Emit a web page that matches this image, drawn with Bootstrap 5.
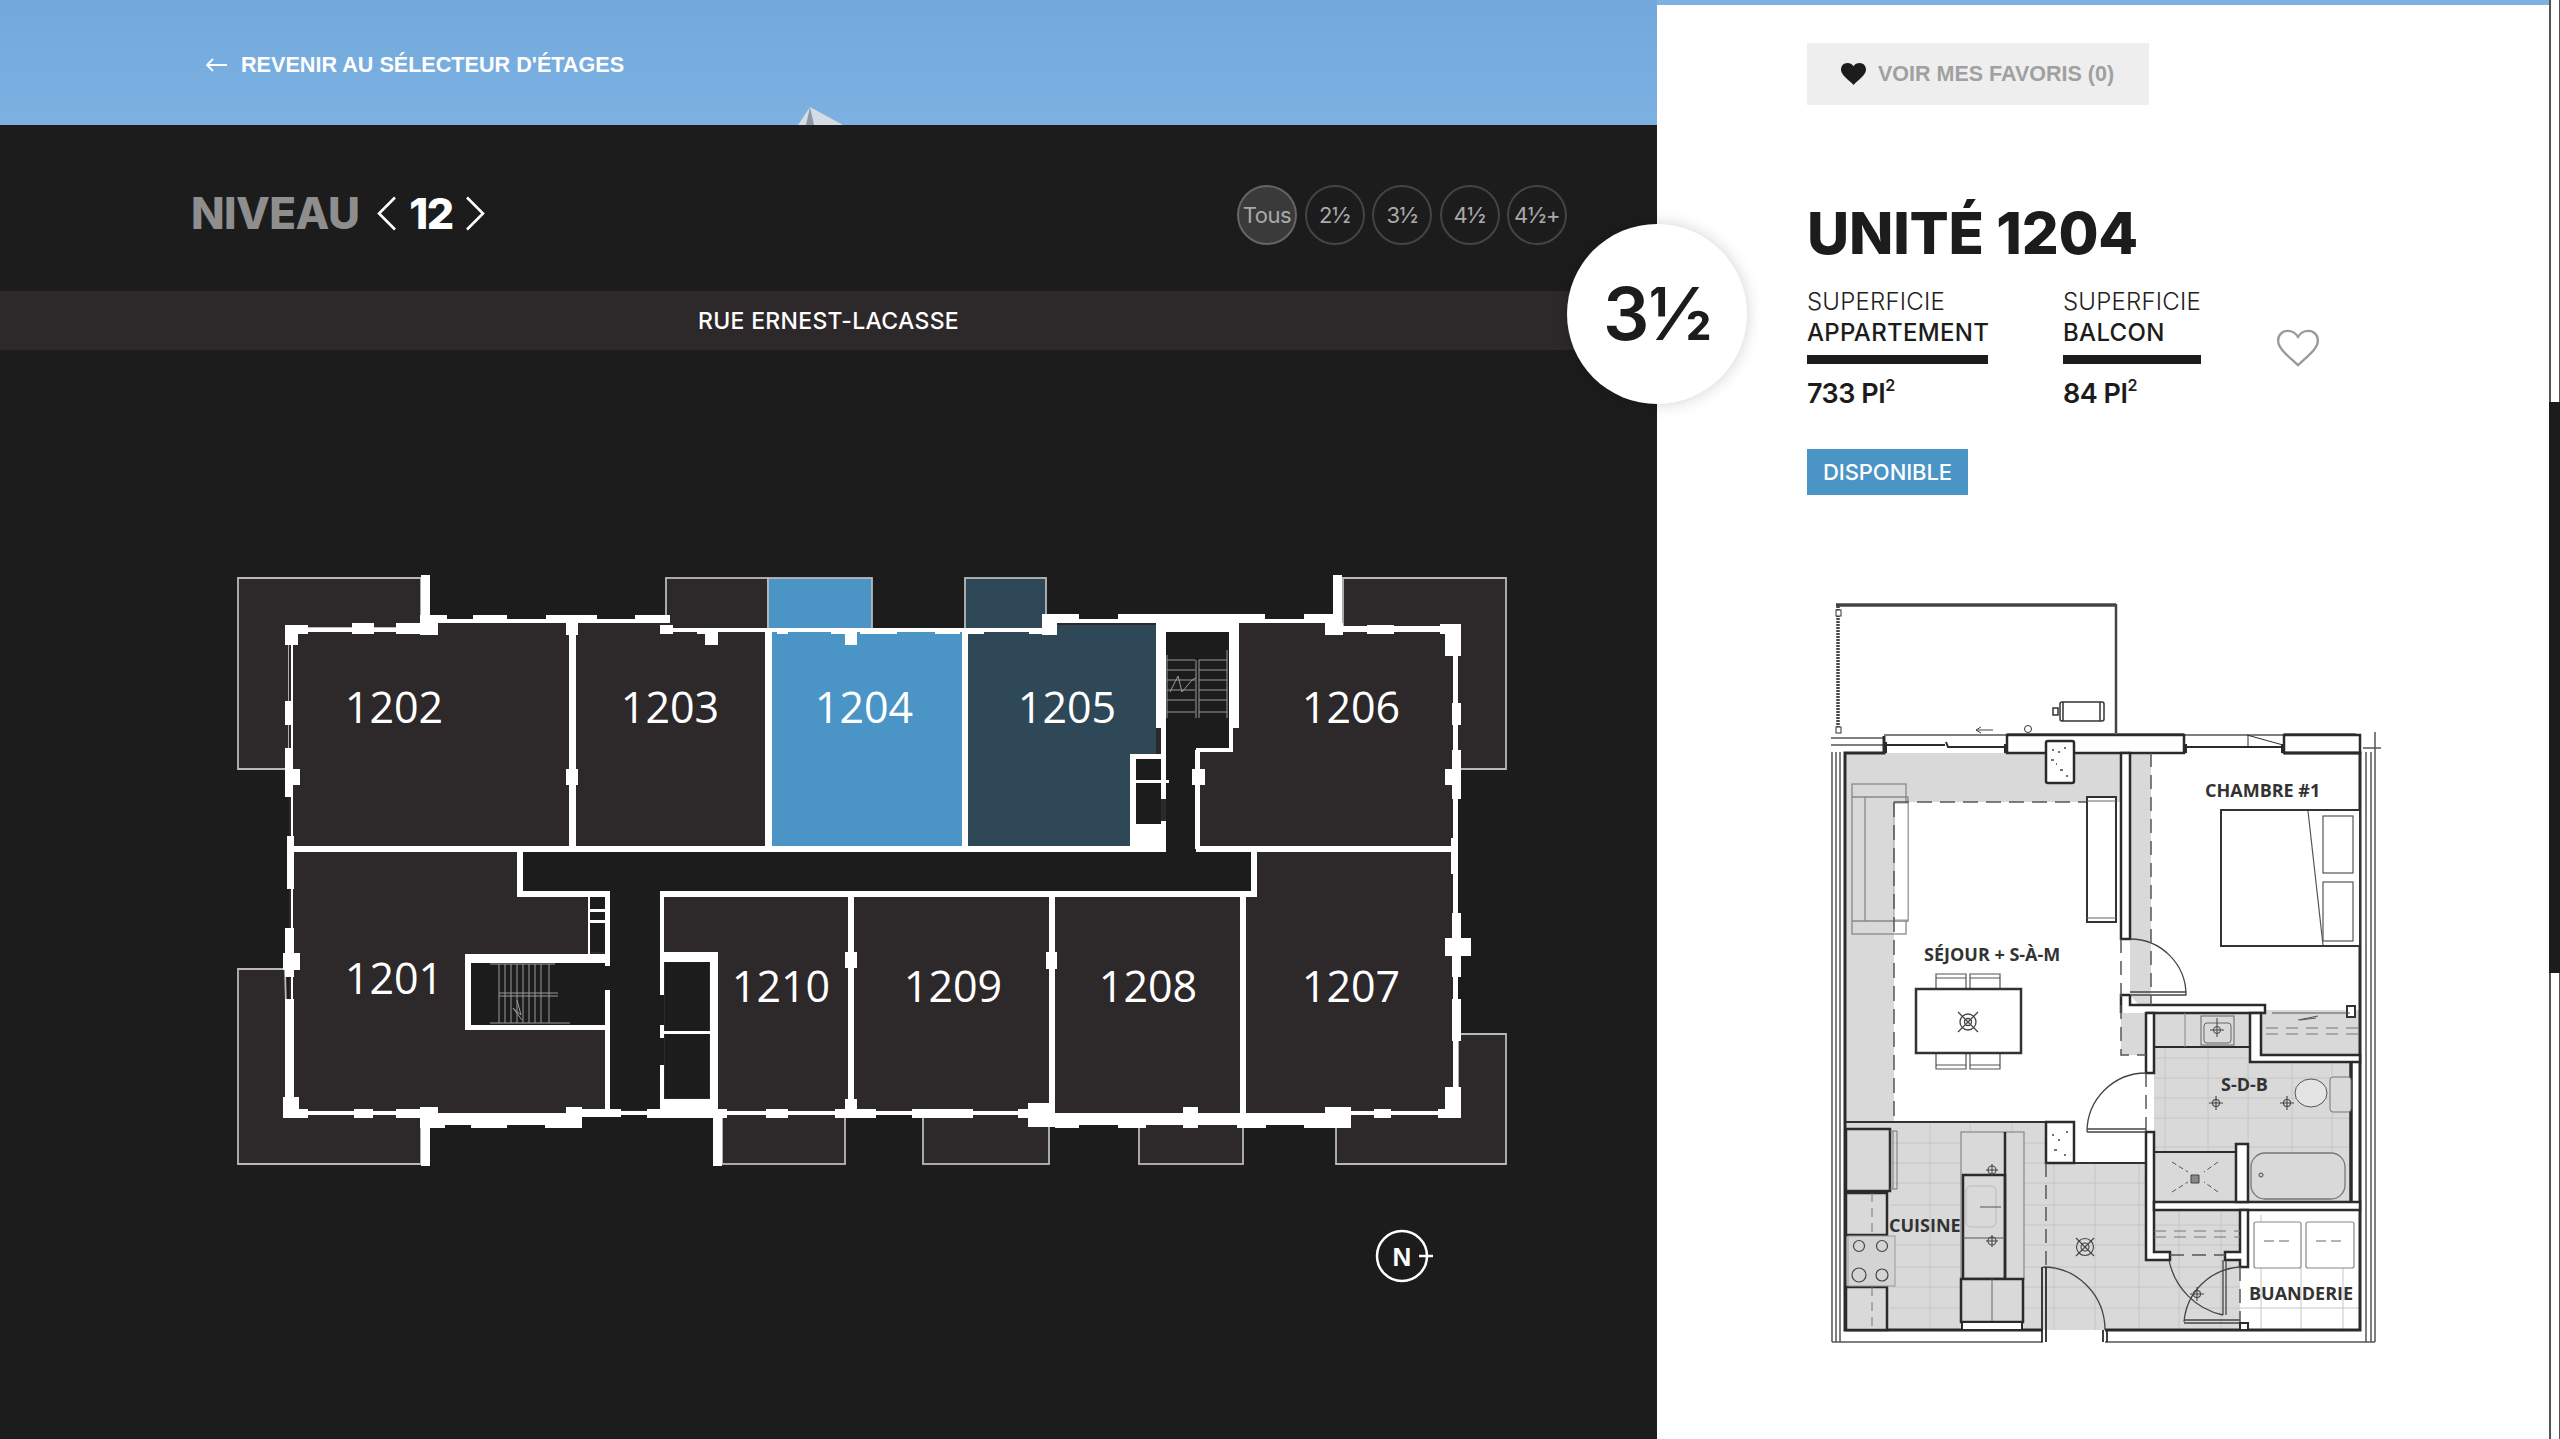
<!DOCTYPE html>
<html lang="fr">
<head>
<meta charset="utf-8">
<title>Unité 1204</title>
<link href="https://cdn.jsdelivr.net/npm/bootstrap@5.3.0/dist/css/bootstrap.min.css" rel="stylesheet">
<style>
html,body{height:100%;margin:0;overflow:hidden;background:#1c1c1c}
body{font-family:"Inter","Liberation Sans",sans-serif}
.stage{width:2560px;height:1439px;overflow:hidden;position:relative}
.level-side{width:1657px;flex:none;background:#1c1c1c}
.sky{height:125px;padding-left:206px;background:linear-gradient(180deg,#72a8db,#7cb1e2);position:relative}
.peak{position:absolute;left:796px;top:105px}
.back-link{font:700 21.6px "Liberation Sans",sans-serif;color:#fff;text-decoration:none;margin-top:5px}
.back-link svg{margin-right:14px}
.level-row{height:166px;padding:10px 90px 0 191px}
.level-name{font-weight:800;font-size:44px;letter-spacing:-.6px;color:#8e8e8e;margin-right:18px;line-height:1}
.level-num{font-weight:800;font-size:43px;letter-spacing:-1.6px;color:#fff;margin:0 12px;line-height:1}
.chip{width:60px;height:60px;border-radius:50%;border:2.5px solid #444;color:#a9a9a9;font-size:22px;letter-spacing:-.5px;padding:0;background:transparent;margin-top:4px}
.chip-on{background:#3a3a3a;border-color:#656565}
.street{height:59px;background:#2d2829;color:#fff;font-size:23px;font-weight:500;letter-spacing:.3px;padding-top:1px}
.plan-svg{display:block}
.plan-svg text{font-family:"Open Sans",sans-serif;fill:#fff;text-anchor:middle;font-size:43px}
.unit-side{width:892px;flex:none;padding-top:5px;background:#7cb1e2}
.unit-pane{height:1434px;background:#fff;padding:38px 0 0 150px}
.fav-btn{width:342px;height:62px;background:#eee;border:0;border-radius:0;color:#a0a0a0;font:700 21.5px "Liberation Sans",sans-serif;padding:0 0 0 34px}
.fav-btn svg{margin-right:12px}
.unit-title{font-weight:800;font-size:58px;letter-spacing:-.2px;color:#1c1c1c;margin:99px 0 0;line-height:1}
.specs{margin-top:24px}
.spec-a{width:181px;margin-right:75px}
.spec-b{width:138px;margin-right:75px}
.spec-top{font-size:24px;font-weight:300;letter-spacing:.2px;color:#222;line-height:31px;white-space:nowrap}
.spec-mid{font-size:24px;font-weight:500;letter-spacing:.3px;color:#1c1c1c;line-height:31px;white-space:nowrap;padding-bottom:7px;border-bottom:9px solid #1c1c1c}
.spec-val{font-size:27px;font-weight:600;letter-spacing:-.5px;color:#1c1c1c;margin-top:14px;line-height:32px}
.spec-val sup{font-size:16px;top:-.75em}
.like{margin-top:43px}
.status{width:161px;height:46px;background:#4a94c6;color:#fff;font-size:22px;font-weight:500;letter-spacing:-.1px;margin-top:39px;border-radius:0;padding:0}
.flat-svg{display:block;margin-top:95px}
.flat-svg text{font-family:"Open Sans",sans-serif;font-weight:700;fill:#333;font-size:18px}
.rail{width:11px;flex:none;height:1439px;background:#fff;border-left:2px solid #555;border-right:1px solid #555}
.rail-top{height:402px}
.rail-thumb{height:571px;background:#1c1c1c;margin:0 -1px 0 -2px}
.type-disc{position:absolute;left:1567px;top:224px;width:180px;height:180px;border-radius:50%;background:#fff;box-shadow:0 0 16px rgba(0,0,0,.18);font-size:73px;font-weight:600;color:#1c1c1c;letter-spacing:-1px}
</style>
</head>
<body>
<div class="stage d-flex">
  <section class="level-side">
    <header class="sky d-flex align-items-center">
      <a class="back-link d-flex align-items-center" href="#">
        <svg width="21" height="14" viewBox="0 0 21 14" fill="none" stroke="#fff" stroke-width="1.8"><path d="M21 7H1M7 1 1 7l6 6"/></svg>
        REVENIR AU SÉLECTEUR D'ÉTAGES</a>
      <svg class="peak" width="48" height="20" viewBox="0 0 48 20"><path d="M2 20 14 2 47 20Z" fill="#d6dce6"/><path d="M10 20 14 2 18 20Z" fill="#8d97a8"/></svg>
    </header>
    <div class="level-row d-flex align-items-center justify-content-between">
      <div class="d-flex align-items-center">
        <span class="level-name">NIVEAU</span>
        <svg width="20" height="35" viewBox="0 0 20 35" fill="none" stroke="#fff" stroke-width="2.6"><path d="M18 1.500 2 17.500l16 16"/></svg>
        <span class="level-num">12</span>
        <svg width="20" height="35" viewBox="0 0 20 35" fill="none" stroke="#fff" stroke-width="2.6"><path d="m2 1.500 16 16-16 16"/></svg>
      </div>
      <div class="d-flex" style="gap:7.500px">
        <button class="chip chip-on" type="button">Tous</button>
        <button class="chip" type="button">2½</button>
        <button class="chip" type="button">3½</button>
        <button class="chip" type="button">4½</button>
        <button class="chip" type="button">4½+</button>
      </div>
    </div>
    <div class="street d-flex align-items-center justify-content-center">RUE ERNEST-LACASSE</div>
    <svg class="plan-svg" width="1657" height="1089" viewBox="0 350 1657 1089" role="img" aria-label="Plan du niveau 12">
      <g stroke="#b9b9b9" stroke-width="1.800" fill="#2d2829">
        <path d="M421 578H238V769H289V628H421Z"/>
        <path d="M1343 578H1506V769H1456V628H1343Z"/>
        <path d="M285 969H238V1164H421V1113H289Z"/>
        <path d="M1458 1034H1506V1164H1336V1113H1458Z"/>
        <rect x="666" y="578" width="102" height="52"/>
        <rect x="768" y="578" width="104" height="52" fill="#4a94c6"/>
        <rect x="965" y="578" width="81" height="52" fill="#2f4858"/>
        <rect x="722" y="1113" width="123" height="51"/>
        <rect x="923" y="1113" width="126" height="51"/>
        <rect x="1139" y="1120" width="104" height="44"/>
      </g>
      <path fill="#2d2829" d="M289 628H425V619H668V628H1042V619H1333V628H1456V1113H1337V1123H1029V1113H582V1123H425V1113H289Z"/>
      <path fill="#4a94c6" d="M772 630H962V846H772Z"/>
      <path fill="#2f4858" d="M968 625H1156V846H968Z"/>
      <path fill="#1c1c1c" d="M523 852H1252V891H664V1110H607V891H523Z"/>
      <path fill="#1c1c1c" d="M1166 632H1229V750H1198V852H1166Z"/>
      <path fill="#1c1c1c" d="M471 962H607V1025H471ZM665 962H709V1098H665ZM1136 759H1161V824H1136ZM590 896H607V952H590Z"/>
      <g stroke="#9a9a9a" stroke-width="1" fill="none">
        <path d="M499 964V1023M505 964V1023M511 964V1023M517 964V1023M523 964V1023M529 964V1023M535 964V1023M541 964V1023M549 964V1023M499 993H558M499 996H558M490 964H555M490 1023H570M517 1000 521 1015 513 1008 522 1020"/>
        <path d="M1167 660H1195M1167 670H1195M1167 680H1195M1167 690H1195M1167 700H1195M1167 712H1195M1199 660H1227M1199 670H1227M1199 680H1227M1199 690H1227M1199 700H1227M1199 712H1227M1196 660V718M1199 660V718M1167 655V718M1227 650V718M1170 692 1178 676 1182 692 1192 680 1196 678"/>
      </g>
      <path fill="#fff" d="
        M287 625H291V628H425V617H429V619H668V628H1042V619H1333V626H1458V1115H1337V1125H1029V1115H582V1125H425V1115H291V628H287Z
        M293 632V1111H425V1113H582V1111H1029V1113H1337V1111H1453V632H1333V623H1042V632H668V623H429V632Z" fill-rule="evenodd"/>
      <path fill="#fff" d="
        M293 846H1166V852H293ZM1196 846H1456V852H1196Z
        M517 849H523V894H517ZM517 891H610V897H517ZM660 891H1256V897H660ZM1251 849H1257V897H1251Z
        M569 628H576V849H569ZM566 623H578V635H566ZM566 769H578V785H566Z
        M765 628H772V849H765ZM962 628H968V849H962Z
        M1156 623H1166V728H1156ZM1161 728H1166V799H1161ZM1161 821H1166V852H1161Z
        M1118 614H1265V623H1118ZM1156 623H1239V632H1156ZM1229 623H1239V728H1229ZM1229 728H1233V752H1229ZM1196 748H1233V752H1196ZM1195 750H1200V849H1195ZM1192 769H1205V785H1192Z
        M1130 824H1166V852H1130ZM1130 754H1136V852H1130ZM1130 754H1161V759H1130ZM1136 780H1169V783H1136Z
        M465 954H610V963H465ZM465 1025H610V1030H465ZM465 954H471V1030H465ZM605 897H610V966H605ZM605 990H610V1113H605ZM588 894H590V954H588ZM590 909H607V912H590ZM590 920H607V923H590Z
        M660 891H664V995H660ZM660 1025H664V1038H660ZM660 1065H664V1113H660ZM660 952H718V962H660ZM710 952H718V1113H710ZM660 1031H710V1034H660ZM660 1099H716V1115H660Z
        M848 894H854V1113H848ZM845 952H857V968H845Z
        M1049 894H1055V1110H1049ZM1046 952H1057V969H1046ZM1028 1103H1055V1127H1028Z
        M1240 894H1246V1123H1240Z
        M421 575H430V634H421ZM1333 575H1342V625H1333ZM421 1107H430V1166H421ZM713 1115H722V1166H713Z"/>
      <path fill="#fff" d="
        M285 625H308V634H285ZM285 625H298V645H285ZM352 623H374V634H352ZM396 623H438V634H396ZM420 615H438V635H420ZM438 615H447V623H438ZM473 615H507V623H473ZM546 615H597V623H546ZM635 615H670V623H635ZM660 625H673V634H660ZM697 628H718V634H697ZM705 628H718V645H705ZM777 628H788V634H777ZM831 628H857V634H831ZM845 628H857V645H845ZM860 628H897V634H860ZM935 628H960V634H935ZM968 628H984V634H968ZM1029 628H1042V634H1029ZM1042 614H1057V635H1042ZM1057 614H1079V623H1057ZM1304 614H1333V623H1304ZM1325 623H1343V635H1325ZM1367 625H1394V634H1367ZM1440 624H1461V634H1440ZM1445 624H1461V656H1445Z
        M1452 703H1461V725H1452ZM1452 750H1461V799H1452ZM1445 769H1461V785H1445ZM1451 838H1458V874H1451ZM1452 913H1461V977H1452ZM1445 938H1471V956H1445ZM1452 999H1461V1041H1452ZM1445 1087H1461V1118H1445ZM1438 1109H1461V1118H1438ZM1374 1109H1391V1118H1374ZM1325 1107H1351V1128H1325ZM1304 1118H1339V1128H1304ZM1237 1118H1266V1128H1237ZM1183 1107H1198V1128H1183ZM1118 1118H1146V1128H1118ZM1055 1118H1079V1128H1055ZM1018 1109H1029V1118H1018ZM912 1109H973V1118H912ZM860 1109H873V1118H860Z
        M716 1109H727V1118H716ZM766 1109H788V1118H766ZM835 1109H876V1118H835ZM845 1099H857V1118H845ZM283 1109H308V1118H283ZM283 1097H299V1118H283ZM354 1109H373V1118H354ZM396 1109H438V1118H396ZM420 1107H438V1128H420ZM438 1118H445V1128H438ZM471 1118H507V1128H471ZM545 1118H582V1128H545ZM566 1107H582V1128H566ZM582 1109H621V1117H582ZM647 1109H716V1118H647Z
        M285 701H293V725H285ZM285 748H293V797H285ZM285 769H300V785H285ZM287 836H294V889H287ZM285 928H294V977H285ZM283 953H300V970H283ZM285 999H294V1097H285Z"/>
      <text x="394" y="723">1202</text><text x="670" y="723">1203</text><text x="864" y="723">1204</text><text x="1067" y="723">1205</text><text x="1351" y="723">1206</text>
      <text x="394" y="994">1201</text><text x="781" y="1002">1210</text><text x="953" y="1002">1209</text><text x="1148" y="1002">1208</text><text x="1351" y="1002">1207</text>
      <circle cx="1402" cy="1256" r="25" fill="none" stroke="#fff" stroke-width="2.500"/>
      <path d="M1419 1256H1433" stroke="#fff" stroke-width="2.500"/>
      <text x="1402" y="1265.500" style="font:700 26px 'Liberation Sans',sans-serif">N</text>
    </svg>
  </section>
  <aside class="unit-side">
    <div class="unit-pane">
      <button class="btn fav-btn d-flex align-items-center" type="button">
        <svg width="25" height="22" viewBox="0 0 24 21"><path fill="#1c1c1c" d="M12 21 10 19C4.500 14 0 10.500 0 6.200 0 2.700 2.700 0 6.200 0 8.500 0 10.700 1.200 12 3 13.300 1.200 15.500 0 17.800 0 21.300 0 24 2.700 24 6.200 24 10.500 19.500 14 14 19Z"/></svg>
        VOIR MES FAVORIS (0)</button>
      <h1 class="unit-title">UNITÉ 1204</h1>
      <div class="specs d-flex align-items-start">
        <div class="spec-a">
          <div class="spec-top">SUPERFICIE</div>
          <div class="spec-mid">APPARTEMENT</div>
          <div class="spec-val">733 PI<sup>2</sup></div>
        </div>
        <div class="spec-b">
          <div class="spec-top">SUPERFICIE</div>
          <div class="spec-mid">BALCON</div>
          <div class="spec-val">84 PI<sup>2</sup></div>
        </div>
        <svg class="like" width="44" height="38" viewBox="0 0 24 21"><path fill="#fff" stroke="#9a9a9a" stroke-width="1.300" d="M12 20 10.600 18.700C5.300 13.900 1 10.400 1 6.400 1 3.300 3.300 1 6.300 1 8.400 1 10.700 2.200 12 4.300 13.300 2.200 15.600 1 17.700 1 20.700 1 23 3.300 23 6.400 23 10.400 18.700 13.900 13.400 18.700Z"/></svg>
      </div>
      <div class="badge status d-flex align-items-center justify-content-center">DISPONIBLE</div>
      <svg class="flat-svg" width="580" height="770" viewBox="1807 590 580 770" role="img" aria-label="Plan de l'unité">
        <g fill="#d9d9d9">
          <path d="M1845 753H2121V802H1894V1122H1845Z"/>
          <path d="M2130 753H2151V1005H2130Z"/>
          <path d="M2121 1013H2148V1055H2121Z"/>
          <path d="M1845 1122H2074V1163H2148V1202H2240V1330H1845Z"/>
          <path d="M2154 1013H2250V1062H2351V1202H2154Z"/>
          <path d="M2261 1010H2360V1055H2261Z"/>
        </g>
        <g stroke="#c6c6c6" stroke-width="1" fill="none">
          <path d="M1930 1122V1330M1970 1122V1330M2012 1122V1330M2054 1163V1330M2095 1163V1330M2139 1163V1330M2179 1210V1330M2221 1210V1330M2261 1215V1330M2301 1268V1330M2343 1268V1330"/>
          <path d="M1890 1143H2046M1890 1163H2148M1890 1183H2148M1890 1205H2240M1890 1225H2240M1890 1245H2240M1890 1267H2240M1890 1287H2240M1890 1308H2360"/>
          <path d="M2154 1058H2250M2154 1078H2351M2154 1098H2351M2154 1118H2351M2154 1147H2351M2165 1047V1152M2208 1047V1152M2248 1062V1152M2292 1062V1152M2332 1062V1152"/>
        </g>
        <path d="M1845 1122H2074M2074 1163H2146" fill="none" stroke="#333" stroke-width="2"/>
        <g fill="none" stroke="#444">
          <path d="M1838 606V733" stroke-width="3.500" stroke-dasharray="2 1"/>
          <path d="M1836 605H2116" stroke-width="3.500"/>
          <path d="M2116 604V733" stroke-width="2.500"/>
          <path d="M1976 730H1993M1976 730l5-3M1976 730l5 3" stroke-width="1"/>
        </g>
        <rect x="1836" y="610" width="5" height="6" fill="#fff" stroke="#333"/><rect x="1836" y="727" width="5" height="6" fill="#fff" stroke="#333"/>
        <circle cx="2028" cy="729" r="3.500" fill="#fff" stroke="#333"/>
        <g fill="#fff" stroke="#333" stroke-width="1.500">
          <rect x="2060" y="702" width="44" height="19" rx="2"/><rect x="2053" y="708" width="5" height="7"/>
          <path d="M2063 702V721M2100 702V721" fill="none"/>
        </g>
        <g fill="none" stroke="#555" stroke-width="1.500">
          <path d="M1831 738H1884M1831 745H1884M2007 734H2184M2284 734H2356M1884 735H2007M2184 735H2284"/>
          <path d="M1832 752V1342M1836 752V1342M1840 752V1342M2366 752V1342M2371 752V1342M2375 732V1342M1832 1342H2043M2105 1342H2375M2363 748 2381 748"/>
        </g>
        <g fill="#fff" stroke="#2b2b2b" stroke-width="2.500">
          <rect x="2007" y="735" width="177" height="18"/>
          <rect x="2284" y="735" width="76" height="18"/>
        </g>
        <path fill="none" stroke="#2b2b2b" stroke-width="2" d="M1886 742V753M1886 745H1945M1946 742 1948 747H2005M2005 744V753M2186 744V753M2186 747H2282M2282 744V753"/>
        <path fill="none" stroke="#2b2b2b" stroke-width="3" d="M1884 736V753H1845V1330H2043M2105 1330H2360V753H2284"/>
        <path fill="none" stroke="#2b2b2b" stroke-width="1" d="M2247 735 2283 745M2248 736V747"/>
        <rect x="2046" y="741" width="28" height="42" rx="2" fill="#fff" stroke="#2b2b2b" stroke-width="2.500"/>
        <rect x="2046" y="1122" width="28" height="41" fill="#fff" stroke="#2b2b2b" stroke-width="2.500"/>
        <path d="M2052 750h2M2058 752h2M2064 748h2M2051 760h3M2060 770h3M2066 776h2M2056 764h1M2052 1135h2M2058 1140h2M2066 1132h2M2054 1150h3M2064 1155h2" stroke="#444" stroke-width="1.500"/>
        <g fill="none" stroke="#888" stroke-width="1.300">
          <rect x="1852" y="784" width="54" height="150"/>
          <path d="M1852 797H1908V921H1852M1865 797V921"/>
        </g>
        <rect x="1894" y="803" width="14" height="117" fill="#fff" stroke="#999" stroke-width="1"/>
        <path d="M1894 802V1122M1894 802H2087" fill="none" stroke="#555" stroke-width="1.500" stroke-dasharray="15 8"/>
        <rect x="2087" y="797" width="29" height="125" fill="#fff" stroke="#333" stroke-width="2"/>
        <path d="M2087 801H2116M2087 918H2116" stroke="#666" stroke-width="1"/>
        <g fill="#fff" stroke="#555" stroke-width="1.200">
          <path d="M1936 989V974H1966V989M1970 989V974H2000V989M1936 978H1966M1970 978H2000M1936 1053V1069H1966V1053M1970 1053V1069H2000V1053M1936 1065H1966M1970 1065H2000"/>
        </g>
        <rect x="1916" y="989" width="105" height="64" fill="#fff" stroke="#333" stroke-width="2.500"/>
        <g fill="none" stroke="#444" stroke-width="1.300"><circle cx="1968" cy="1022" r="8"/><circle cx="1968" cy="1022" r="3.500"/><path d="M1958 1012 1978 1032M1978 1012 1958 1032"/></g>
        <rect x="2221" y="810" width="139" height="136" fill="#fff" stroke="#333" stroke-width="2"/>
        <g fill="#fff" stroke="#555" stroke-width="1.200"><rect x="2323" y="816" width="30" height="57"/><rect x="2323" y="882" width="30" height="59"/><path d="M2308 811 2323 945"/></g>
        <g fill="#fff" stroke="#2b2b2b" stroke-width="2.500">
          <rect x="2121" y="753" width="9" height="186"/>
          <path d="M2130 995H2121V1013M2130 995V1005H2265V1013H2146"/>
          <rect x="2146" y="1013" width="8" height="60"/>
          <path d="M2146 1132H2154V1252H2170V1260H2146Z"/>
          <rect x="2154" y="1202" width="206" height="8"/>
          <rect x="2236" y="1144" width="12" height="58"/>
          <path d="M2240 1210H2248V1267H2240V1260H2225V1252H2240Z"/>
          <path d="M2250 1013H2261V1055H2360V1062H2250Z"/>
        </g>
        <rect x="2347" y="1006" width="8" height="11" fill="#fff" stroke="#333" stroke-width="2"/>
        <path d="M2351 1062V1202" stroke="#2b2b2b" stroke-width="3.500"/>
        <g fill="none" stroke="#444" stroke-width="1.300">
          <path d="M2130 939A56 56 0 0 1 2186 995M2130 992H2186V995H2130"/>
          <path d="M2146 1073A59 59 0 0 0 2087 1132M2087 1129H2146M2087 1132H2146"/>
          <path d="M2043 1267A62 63 0 0 1 2105 1330"/>
          <path d="M2169 1260A70 70 0 0 0 2223 1315M2223 1260V1315M2226 1260V1315"/>
          <path d="M2240 1267A60 60 0 0 0 2184 1322M2184 1320H2240M2184 1323H2240"/>
        </g>
        <path d="M2042 1267V1342M2046 1267V1342M2103 1330V1342M2107 1330V1342" fill="none" stroke="#2b2b2b" stroke-width="1.800"/>
        <path d="M2121 939V1055H2146M2146 1073V1132M2046 1163V1267M2151 753V1005M2240 1267V1323M2170 1255H2225" fill="none" stroke="#555" stroke-width="1.500" stroke-dasharray="14 8"/>
        <g fill="#d9d9d9" stroke="#2b2b2b" stroke-width="2.500">
          <rect x="1846" y="1129" width="44" height="62"/>
          <rect x="1846" y="1193" width="41" height="42"/>
          <rect x="1846" y="1287" width="41" height="43"/>
        </g>
        <path d="M1890 1131H1897V1189H1890M1893 1131V1189" fill="none" stroke="#777"/>
        <path d="M1872 1193V1235M1872 1287V1330" stroke="#777" stroke-dasharray="9 6"/>
        <rect x="1848" y="1236" width="47" height="50" fill="#d4d4d4" stroke="#999"/>
        <g fill="none" stroke="#444" stroke-width="1.200"><circle cx="1859" cy="1246" r="5.500"/><circle cx="1882" cy="1246" r="5.500"/><circle cx="1859" cy="1275" r="7"/><circle cx="1882" cy="1275" r="6"/></g>
        <g fill="#d9d9d9" stroke="#888" stroke-width="1.200"><rect x="1961" y="1132" width="63" height="147"/></g>
        <path d="M2005 1132V1280" stroke="#2b2b2b" stroke-width="2.500"/>
        <rect x="1963" y="1175" width="42" height="104" fill="none" stroke="#2b2b2b" stroke-width="2.500"/>
        <rect x="1966" y="1186" width="30" height="41" rx="5" fill="none" stroke="#bbb"/>
        <path d="M1963 1238H2005M1980 1207H2001" stroke="#555" stroke-width="1"/>
        <rect x="1961" y="1279" width="62" height="43" fill="#d9d9d9" stroke="#2b2b2b" stroke-width="2.500"/>
        <path d="M1992 1279V1322" stroke="#666"/>
        <rect x="1962" y="1322" width="60" height="8" fill="#fff" stroke="#2b2b2b" stroke-width="2"/>
        <g fill="none" stroke="#444" stroke-width="1.100">
          <circle cx="1992" cy="1170" r="4"/><path d="M1986 1170H1998M1992 1164V1176"/>
          <circle cx="1992" cy="1241" r="4"/><path d="M1986 1241H1998M1992 1235V1247"/>
          <circle cx="2085" cy="1247" r="8.500"/><circle cx="2085" cy="1247" r="4"/><path d="M2076 1238 2094 1256M2094 1238 2076 1256"/>
          <circle cx="2216" cy="1103" r="3.500"/><path d="M2209 1103H2223M2216 1096V1110"/>
          <circle cx="2287" cy="1103" r="3.500"/><path d="M2280 1103H2294M2287 1096V1110"/>
          <circle cx="2197" cy="1294" r="3.500"/><path d="M2190 1294H2204M2197 1287V1301"/>
        </g>
        <rect x="2154" y="1013" width="96" height="34" fill="none" stroke="#2b2b2b" stroke-width="2"/>
        <path d="M2185 1013V1047" stroke="#888"/>
        <rect x="2201" y="1016" width="33" height="29" fill="none" stroke="#666"/><rect x="2204" y="1023" width="27" height="20" rx="3" fill="none" stroke="#666"/>
        <g fill="none" stroke="#444"><circle cx="2217" cy="1030" r="3.500"/><path d="M2210 1030H2224M2217 1018V1037"/></g>
        <ellipse cx="2311" cy="1093" rx="16" ry="14" fill="#e4e4e4" stroke="#555"/>
        <rect x="2330" y="1077" width="21" height="35" rx="3" fill="#d9d9d9" stroke="#777"/>
        <rect x="2154" y="1152" width="82" height="50" fill="none" stroke="#2b2b2b" stroke-width="2"/>
        <path d="M2172 1162 2188 1172M2218 1162 2204 1172M2172 1192 2188 1182M2218 1192 2204 1182" stroke="#555" stroke-dasharray="5 3"/>
        <path d="M2191 1175h8v8h-8Z" fill="#888" stroke="#444"/>
        <rect x="2251" y="1153" width="94" height="46" rx="14" fill="#d9d9d9" stroke="#777" stroke-width="1.300"/>
        <circle cx="2261" cy="1175" r="2" fill="none" stroke="#444"/>
        <path d="M2266 1028H2360M2266 1034H2360M2154 1231H2240M2154 1237H2240" stroke="#777" stroke-dasharray="12 8"/>
        <path d="M2272 1013H2350M2298 1020 2318 1016M2300 1020 2316 1018" stroke="#555" stroke-width="1"/>
        <g fill="#fff" stroke="#888" stroke-width="1.200"><rect x="2254" y="1222" width="47" height="46" rx="2"/><rect x="2306" y="1222" width="48" height="46" rx="2"/></g>
        <path d="M2264 1241H2292M2316 1241H2344" stroke="#666" stroke-dasharray="10 5"/>
        <rect x="2240" y="1323" width="8" height="7" fill="#fff" stroke="#2b2b2b" stroke-width="2"/>
        <text x="2205" y="797">CHAMBRE #1</text>
        <text x="1924" y="961">SÉJOUR + S-À-M</text>
        <text x="2221" y="1091">S-D-B</text>
        <text x="1889" y="1232">CUISINE</text>
        <text x="2249" y="1300">BUANDERIE</text>
      </svg>
    </div>
  </aside>
  <div class="rail" aria-hidden="true">
    <div class="rail-top"></div>
    <div class="rail-thumb"></div>
  </div>
  <div class="type-disc d-flex align-items-center justify-content-center">3½</div>
</div>
<script src="https://cdn.jsdelivr.net/npm/bootstrap@5.3.0/dist/js/bootstrap.bundle.min.js"></script>
</body>
</html>
